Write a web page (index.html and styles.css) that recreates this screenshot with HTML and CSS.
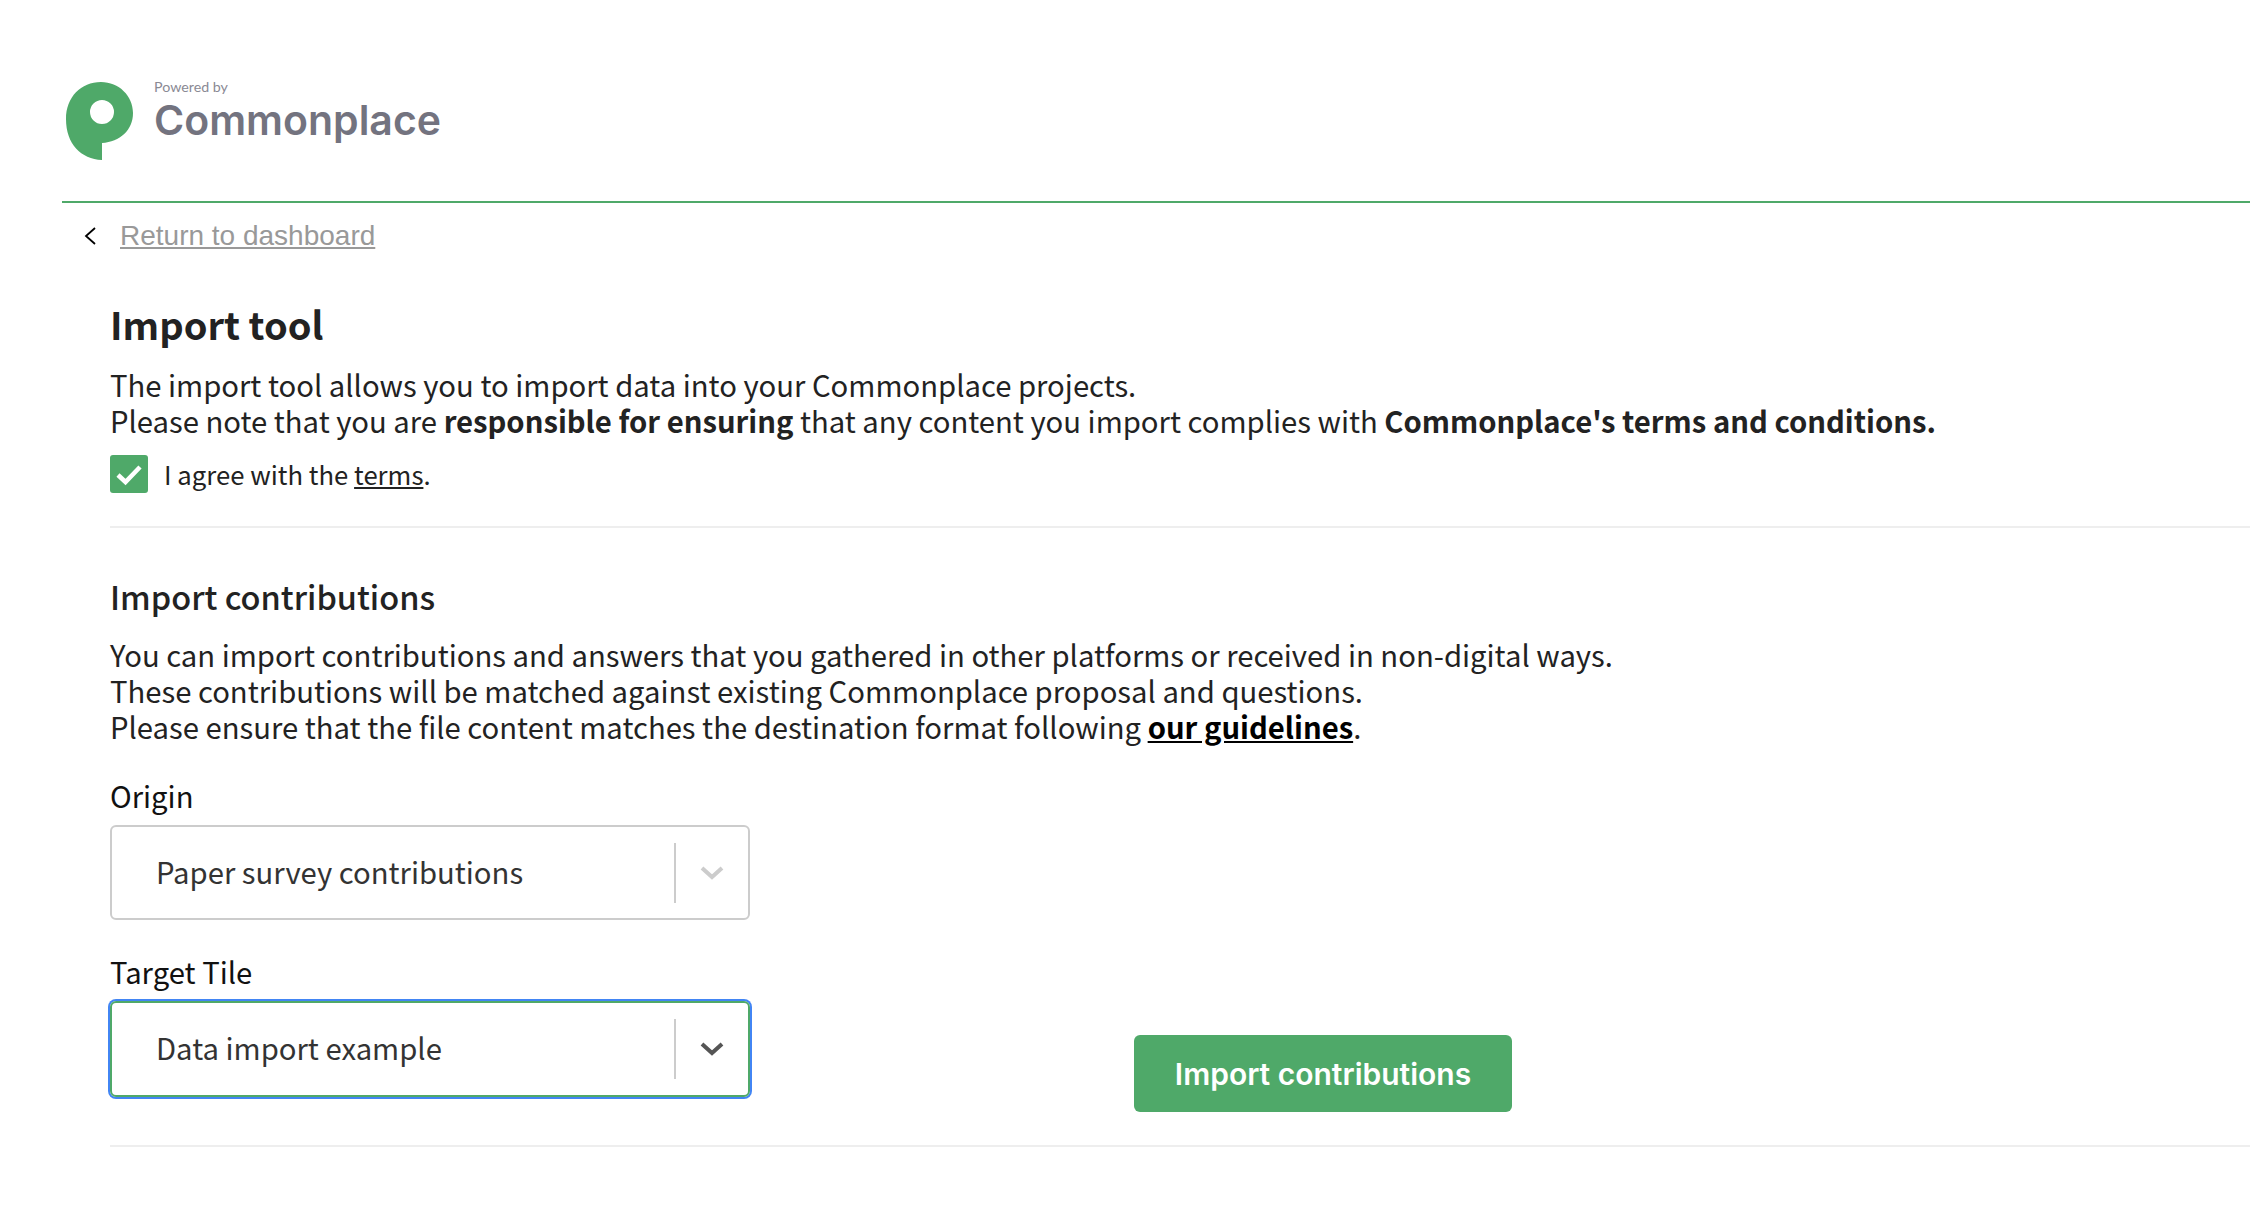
FILE: index.html
```html
<!DOCTYPE html>
<html lang="en">
<head>
    <meta charset="UTF-8">
    <meta name="viewport" content="width=device-width, initial-scale=1.0">
    <title>Import tool</title>
    <link rel="stylesheet" href="styles.css">
</head>
<body>
    <header class="site-header">
        <svg class="logo-mark" viewBox="0 0 67 79" width="67" height="79" aria-hidden="true">
            <path fill-rule="evenodd" fill="#4fa969" d="M35 0C53 0 67 14 67 31C67 48 54 60 36 61L36 78C15 77 0 62 0 37C0 15 15 0 35 0ZM36 18A12 12 0 1 0 36 42A12 12 0 1 0 36 18Z"/>
        </svg>
        <div class="logo-text">
            <span class="logo-powered">Powered by</span>
            <span class="logo-name">Commonplace</span>
        </div>
    </header>

    <div class="back-row">
        <svg class="back-icon" viewBox="0 0 12 18" width="12" height="18" aria-hidden="true">
            <path d="M11 1L2 9L11 17" fill="none" stroke="#000" stroke-width="1.8"/>
        </svg>
        <a class="back-link" href="#">Return to dashboard</a>
    </div>

    <main class="content">
        <section class="block block-intro">
            <h1>Import tool</h1>
            <p>The import tool allows you to import data into your Commonplace projects.<br>
            Please note that you are <strong>responsible for ensuring</strong> that any content you import complies with <strong>Commonplace's terms and conditions.</strong></p>
            <div class="agree-row">
                <span class="checkbox">
                    <svg viewBox="0 0 38 38" width="38" height="38" aria-hidden="true">
                        <path d="M8 20L15.500 27L30 12" fill="none" stroke="#fff" stroke-width="4.500"/>
                    </svg>
                </span>
                <span class="agree-label">I agree with the <a href="#">terms</a>.</span>
            </div>
        </section>

        <section class="block block-import">
            <h2>Import contributions</h2>
            <p>You can import contributions and answers that you gathered in other platforms or received in non-digital ways.<br>
            These contributions will be matched against existing Commonplace proposal and questions.<br>
            Please ensure that the file content matches the destination format following <a class="guide-link" href="#">our guidelines</a>.</p>

            <div class="form-row">
                <div class="form-fields">
                    <label class="field-label">Origin</label>
                    <div class="select">
                        <span class="select-value">Paper survey contributions</span>
                        <span class="select-sep"></span>
                        <svg class="select-arrow" viewBox="0 0 30 30" width="30" height="30" aria-hidden="true">
                            <path d="M5 10L15 19L25 10" fill="none" stroke="#ccc" stroke-width="4"/>
                        </svg>
                    </div>
                    <label class="field-label">Target Tile</label>
                    <div class="select select-focus">
                        <span class="select-value">Data import example</span>
                        <span class="select-sep"></span>
                        <svg class="select-arrow" viewBox="0 0 30 30" width="30" height="30" aria-hidden="true">
                            <path d="M5 10L15 19L25 10" fill="none" stroke="#555" stroke-width="4"/>
                        </svg>
                    </div>
                </div>
                <button class="import-btn">Import contributions</button>
            </div>
        </section>
    </main>
</body>
</html>
```

FILE: styles.css
```css
body {
    font-family: "Noto Sans CJK SC", "Noto Sans", sans-serif;
    margin: 0;
    color: #222;
    background: #fff;
    font-size: 29.25px;
    line-height: 36px;
}

.site-header {
    display: flex;
    align-items: flex-start;
    margin-left: 62px;
    padding: 82px 0 40px 4px;
    height: 79px;
    border-bottom: 2px solid #4fa969;
}

.logo-text {
    display: flex;
    flex-direction: column;
    margin: -3px 0 0 21px;
    font-family: Inter, sans-serif;
    color: #73737f;
}

.logo-powered {
    margin-bottom: 3px;
    font-family: Lato, sans-serif;
    font-size: 14.250px;
    line-height: 16px;
    color: #8a8a94;
}

.logo-name {
    font-size: 41px;
    line-height: 44px;
    font-weight: 600;
}

.back-row {
    display: flex;
    align-items: center;
    gap: 24px;
    margin: 15px 0 0 84px;
}

.back-link {
    font-family: "Liberation Sans", sans-serif;
    font-size: 28px;
    color: #999;
}

.content {
    margin-left: 110px;
}

.block {
    border-bottom: 2px solid #eee;
}

.block-intro {
    padding: 45px 0 33px;
}

h1 {
    margin: 0 0 17px;
    font-size: 38px;
    line-height: 50px;
    font-weight: 700;
}

h2 {
    margin: 0 0 18px;
    font-size: 32.500px;
    line-height: 44px;
    font-weight: 500;
}

p {
    margin: 0;
}

.agree-row {
    display: flex;
    align-items: center;
    gap: 16px;
    margin-top: 17px;
}

.checkbox {
    display: block;
    width: 38px;
    height: 38px;
    background: #4fa969;
    border-radius: 3px;
}

.agree-label {
    font-size: 25.700px;
}

a {
    color: inherit;
}

.guide-link {
    color: #000;
    font-weight: 700;
}

.block-import {
    padding: 46px 0 48px;
}

.form-row {
    display: flex;
    align-items: flex-end;
}

.form-fields {
    width: 640px;
    margin-top: 33px;
}

.field-label {
    display: block;
    margin-bottom: 12px;
    color: #111;
}

.select {
    display: flex;
    align-items: center;
    box-sizing: border-box;
    height: 95px;
    margin-bottom: 33px;
    padding-left: 44px;
    border: 2px solid #ccc;
    border-radius: 6px;
    color: #333;
}

.select:last-child {
    margin-bottom: 0;
}

.select-focus {
    height: 96px;
    border-color: #4fa969;
    box-shadow: 0 0 0 2px #4285f4;
}

.select-value {
    flex: 1;
    padding-bottom: 4px;
}

.select-sep {
    width: 2px;
    height: 60px;
    background: #ccc;
}

.select-arrow {
    margin: 0 21px;
}

.import-btn {
    width: 378px;
    height: 77px;
    margin: 0 0 -15px 384px;
    border: none;
    border-radius: 6px;
    background: #4fa969;
    color: #fff;
    font-family: Inter, sans-serif;
    font-size: 30px;
    font-weight: 600;
}
```
